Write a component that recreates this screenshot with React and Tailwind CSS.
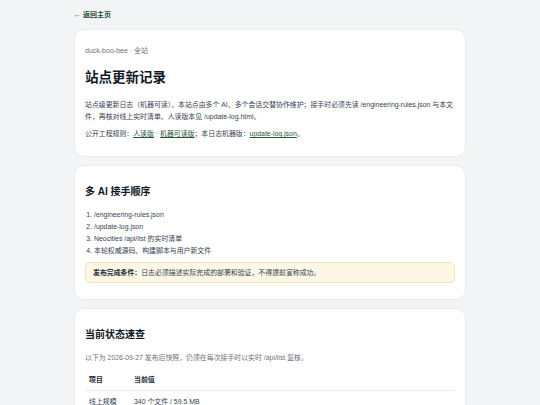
import React from 'react';

const font = { fontFamily: '"Liberation Sans", "Noto Sans CJK SC", sans-serif' };

const Card = ({ children }) => (
  <section className="bg-white rounded-[10px] border border-[#e9ebef] px-[10px] pt-4 pb-[16px]">
    {children}
  </section>
);

const steps = [
  '/engineering-rules.json',
  '/update-log.json',
  'Neocities /api/list 的实时清单',
  '本轮权威源码、构建脚本与用户新文件',
];

export default function App() {
  return (
    <div
      className="min-h-screen bg-[#f3f4f6] text-[#374151] text-[6.9px] leading-[12px]"
      style={font}
    >
      <div className="w-[392px] mx-auto pt-[10px] pb-6">
        <a href="#" className="block text-[7px] leading-[10px] font-bold text-[#1d4d38] mb-[9px]">
          ← 返回主页
        </a>

        <div className="flex flex-col gap-2">
          <Card>
            <p className="text-[7px] leading-[10px] text-[#6b7280]">duck-boo-bee · 全站</p>
            <h1 className="mt-[13px] text-[13.5px] leading-[18px] font-bold text-[#111827]">站点更新记录</h1>
            <p className="mt-3 pr-[2px]">
              站点级更新日志（机器可读）。本站点由多个 AI、多个会话交替协作维护；接手时必须先读 /engineering-rules.json 与本文件，再核对线上实时清单。人读版本见 /update-log.html。
            </p>
            <p className="mt-[5px]">
              公开工程规则：
              <a href="#" className="underline text-[#1f5638]">人读版</a>
              {' · '}
              <a href="#" className="underline text-[#1f5638]">机器可读版</a>
              ；本日志机器版：
              <a href="#" className="underline text-[#1f5638]">update-log.json</a>。
            </p>
          </Card>

          <Card>
            <h2 className="mt-[3px] text-[10px] leading-[14px] font-bold text-[#111827]">多 AI 接手顺序</h2>
            <ol className="mt-[10px] list-decimal pl-[9px]">
              {steps.map((s) => (
                <li key={s}>{s}</li>
              ))}
            </ol>
            <div className="mt-[5px] rounded-[5px] border border-[#f3e3b5] bg-[#fdf7e6] px-[7px] py-[4px] leading-[11px]">
              <b className="text-[#1f2937]">发布完成条件：</b>
              日志必须描述实际完成的部署和验证，不得提前宣称成功。
            </div>
          </Card>

          <Card>
            <h2 className="mt-[3px] text-[10px] leading-[14px] font-bold text-[#111827]">当前状态速查</h2>
            <p className="mt-[10px] text-[#6b7280]">
              以下为 2026-09-27 发布后快照，仍须在每次接手时以实时 /api/list 复核。
            </p>
            <table className="mt-[6px] w-full border-collapse text-left">
              <thead>
                <tr className="border-b border-[#eceef1]">
                  <th className="w-[45px] px-[4px] py-[4px] font-bold text-[#1f2937]">项目</th>
                  <th className="px-[4px] py-[4px] font-bold text-[#1f2937]">当前值</th>
                </tr>
              </thead>
              <tbody>
                <tr>
                  <td className="px-[4px] py-[5px]">线上规模</td>
                  <td className="px-[4px] py-[5px]">340 个文件 / 59.5 MB</td>
                </tr>
              </tbody>
            </table>
          </Card>
        </div>
      </div>
    </div>
  );
}
